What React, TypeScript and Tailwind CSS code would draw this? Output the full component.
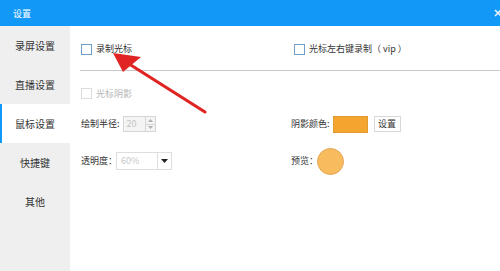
import React from "react";

const navItems = ["录屏设置", "直播设置", "鼠标设置", "快捷键", "其他"];

function Box({ disabled }: { disabled?: boolean }) {
  return (
    <span
      className={
        "inline-block w-[11px] h-[11px] border bg-white " +
        (disabled ? "border-[#dcdcdc]" : "border-[#6f9dcc]")
      }
    />
  );
}

export default function App() {
  return (
    <div
      className="relative w-[500px] h-[271px] overflow-hidden bg-white text-[#333]"
      style={{ fontFamily: '"Noto Sans CJK SC", "Noto Sans", sans-serif' }}
    >
      {/* title bar */}
      <div className="h-[26px] bg-[#1299f7] flex items-center justify-between pl-[13px] pr-0">
        <span className="text-[9px] text-white leading-none">设置</span>
        <svg width="8" height="8" viewBox="0 0 8 8" className="mr-[-2px]">
          <path d="M1 1 L7 7 M7 1 L1 7" stroke="#dff1ff" strokeWidth="1.6" />
        </svg>
      </div>

      <div className="flex h-[245px]">
        {/* sidebar */}
        <div className="w-[70px] bg-[#efefef] flex flex-col">
          {navItems.map((n, i) => (
            <div
              key={n}
              className={
                "h-[39px] flex items-center justify-center text-[10px] relative " +
                (i === 2 ? "bg-white" : "")
              }
            >
              {i === 2 && <span className="absolute left-0 top-0 bottom-0 w-[2px] bg-[#1299f7]" />}
              {n}
            </div>
          ))}
        </div>

        {/* content */}
        <div className="flex-1 pl-[10px] text-[9px]">
          <div className="h-[44px] flex items-center pt-[2px]">
            <div className="w-[214px] flex items-center gap-[4px] pl-[1px]">
              <Box />
              <span>录制光标</span>
            </div>
            <div className="flex items-center gap-[4px]">
              <Box />
              <span>光标左右键录制（ vip ）</span>
            </div>
          </div>
          <div className="h-px bg-[#c8c8c8]" />
          <div className="h-[44px] flex items-center gap-[4px] pl-[1px] pt-[1px]">
            <Box disabled />
            <span className="text-[#b5b5b5]">光标阴影</span>
          </div>

          <div className="flex items-center h-[18px]">
            <div className="w-[211px] flex items-center pl-[1px]">
              <span>绘制半径:</span>
              <div className="ml-[3px] w-[33px] h-[16px] border border-[#d6d6d6] bg-[#f4f4f4] flex">
                <span className="flex-1 pl-[3px] text-[#c4c4c4] leading-[14px] text-[9px]">20</span>
                <div className="w-[10px] border-l border-[#d6d6d6] flex flex-col">
                  <div className="flex-1 flex items-center justify-center border-b border-[#d6d6d6]">
                    <svg width="5" height="3" viewBox="0 0 5 3"><path d="M0 3 L2.5 0 L5 3Z" fill="#b0b0b0" /></svg>
                  </div>
                  <div className="flex-1 flex items-center justify-center">
                    <svg width="5" height="3" viewBox="0 0 5 3"><path d="M0 0 L2.5 3 L5 0Z" fill="#b0b0b0" /></svg>
                  </div>
                </div>
              </div>
            </div>
            <div className="flex items-center">
              <span>阴影颜色:</span>
              <span className="ml-[3px] w-[35px] h-[17px] bg-[#f3a52f] border border-[#e09a30]" />
              <span className="ml-[6px] w-[27px] h-[16px] border border-[#d8d8d8] flex items-center justify-center">设置</span>
            </div>
          </div>

          <div className="flex items-center h-[28px] mt-[14px]">
            <div className="w-[211px] flex items-center pl-[1px]">
              <span>透明度：</span>
              <div className="ml-[-1px] w-[56px] h-[18px] border border-[#dedede] flex">
                <span className="flex-1 pl-[4px] text-[#c8c8c8] leading-[16px]">60%</span>
                <div className="w-[14px] border-l border-[#dedede] flex items-center justify-center">
                  <svg width="7" height="4" viewBox="0 0 7 4"><path d="M0 0 L3.5 4 L7 0Z" fill="#222" /></svg>
                </div>
              </div>
            </div>
            <div className="flex items-center">
              <span>预览：</span>
              <span className="ml-[-1px] w-[27px] h-[27px] rounded-full bg-[#f8bb5d] border border-[#e3a457]" />
            </div>
          </div>
        </div>
      </div>

      {/* red arrow annotation */}
      <svg className="absolute left-0 top-0 pointer-events-none" width="500" height="271">
        <line x1="205" y1="112" x2="126" y2="62" stroke="#e02424" strokeWidth="3.2" strokeLinecap="round" />
        <path d="M113 53 L123 72 L141 57 Z" fill="#e02424" />
      </svg>
    </div>
  );
}
